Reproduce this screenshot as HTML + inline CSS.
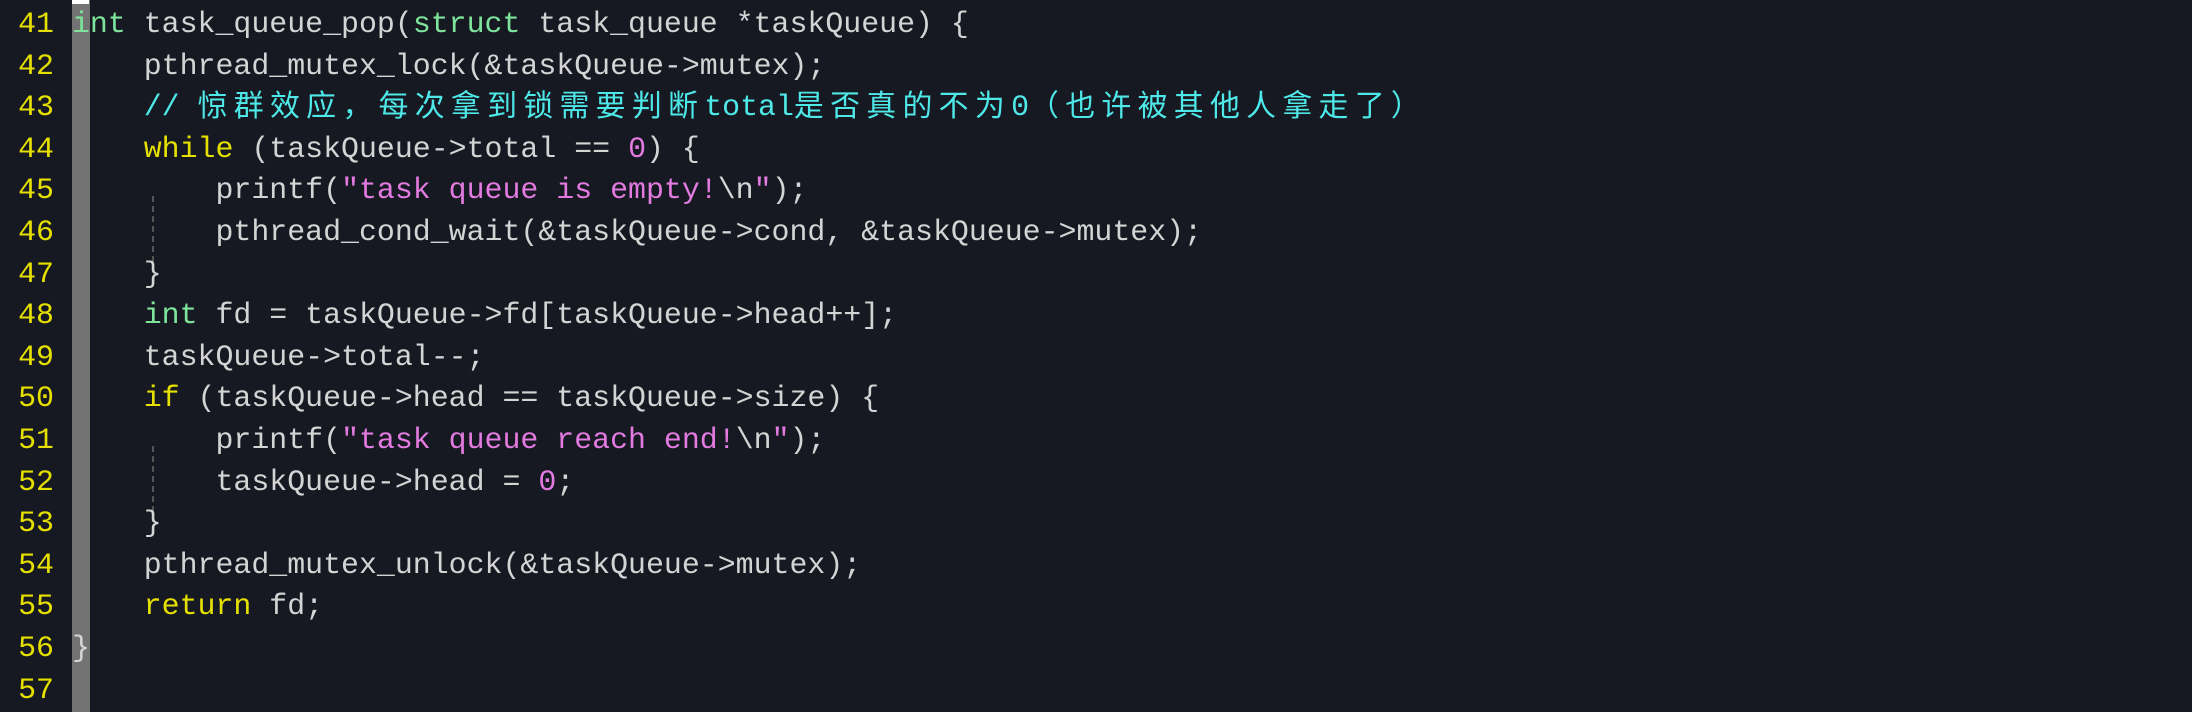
<!DOCTYPE html>
<html><head><meta charset="utf-8"><style>
html,body{margin:0;padding:0;background:#161921;width:2192px;height:712px;overflow:hidden}
body{position:relative;font-family:"Liberation Mono","Noto Sans CJK SC",monospace;font-size:29.9px;color:#d4d4d4}
.bar{position:absolute;left:72px;top:0;width:18px;height:712px;background:#737373}
.cur{position:absolute;left:72px;top:0;width:17px;height:4px;background:#fff}
.ln{position:absolute;left:0;width:54px;text-align:right;color:#e6e000;line-height:41.6px}
.code{position:absolute;left:72px;top:4px}
.code div{height:41.6px;line-height:41.6px;white-space:pre}
.g{color:#7ee49c}.y{color:#e6e000}.m{color:#e27ae0}.c{color:#4ee8e8}
.cj{font-family:"Noto Sans CJK SC",sans-serif;letter-spacing:6.3px;line-height:1;font-size:29.9px;position:relative;top:1px}
.guide{position:absolute;left:152px;width:0;border-left:2px dashed #555}
</style></head><body>
<div class="bar"></div><div class="cur"></div>
<div class="ln" style="top:4px">41<br>42<br>43<br>44<br>45<br>46<br>47<br>48<br>49<br>50<br>51<br>52<br>53<br>54<br>55<br>56<br>57</div>
<div class="guide" style="top:196px;height:76px"></div>
<div class="guide" style="top:446px;height:76px"></div>
<div class="code">
<div><span class="g">int</span> task_queue_pop(<span class="g">struct</span> task_queue *taskQueue) {</div>
<div>    pthread_mutex_lock(&amp;taskQueue-&gt;mutex);</div>
<div>    <span class="c">// <span class="cj">惊群效应，每次拿到锁需要判断</span>total<span class="cj">是否真的不为</span>0<span class="cj">（也许被其他人拿走了）</span></span></div>
<div>    <span class="y">while</span> (taskQueue-&gt;total == <span class="m">0</span>) {</div>
<div>        printf(<span class="m">"task queue is empty!</span>\n<span class="m">"</span>);</div>
<div>        pthread_cond_wait(&amp;taskQueue-&gt;cond, &amp;taskQueue-&gt;mutex);</div>
<div>    }</div>
<div>    <span class="g">int</span> fd = taskQueue-&gt;fd[taskQueue-&gt;head++];</div>
<div>    taskQueue-&gt;total--;</div>
<div>    <span class="y">if</span> (taskQueue-&gt;head == taskQueue-&gt;size) {</div>
<div>        printf(<span class="m">"task queue reach end!</span>\n<span class="m">"</span>);</div>
<div>        taskQueue-&gt;head = <span class="m">0</span>;</div>
<div>    }</div>
<div>    pthread_mutex_unlock(&amp;taskQueue-&gt;mutex);</div>
<div>    <span class="y">return</span> fd;</div>
<div>}</div>
</div>
</body></html>
